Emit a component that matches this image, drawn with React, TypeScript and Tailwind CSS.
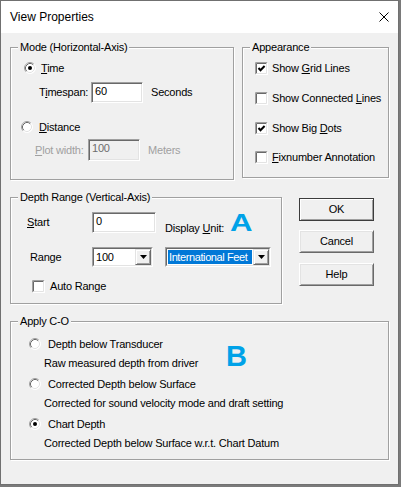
function Radio({ checked = false }: { checked?: boolean }) {
  return (
    <svg width="12" height="12" viewBox="0 0 12 12" className="shrink-0">
      <circle cx="6" cy="6" r="5.5" fill="#fff" />
      <path d="M2.11 9.89 A5.5 5.5 0 0 1 9.89 2.11" fill="none" stroke="#a0a0a0" />
      <path d="M2.82 9.18 A4.5 4.5 0 0 1 9.18 2.82" fill="none" stroke="#696969" />
      <path d="M9.89 2.11 A5.5 5.5 0 0 1 2.11 9.89" fill="none" stroke="#ffffff" />
      <path d="M9.18 2.82 A4.5 4.5 0 0 1 2.82 9.18" fill="none" stroke="#e3e3e3" />
      {checked && <circle cx="6" cy="6" r="2" fill="#000" />}
    </svg>
  );
}

function Check({ checked = false }: { checked?: boolean }) {
  return (
    <svg width="13" height="13" viewBox="0 0 13 13" className="shrink-0">
      <rect x="0" y="0" width="13" height="13" fill="#fff" />
      <path d="M0.5 12.5 V0.5 H12.5" fill="none" stroke="#a0a0a0" />
      <path d="M1.5 11.5 V1.5 H11.5" fill="none" stroke="#696969" />
      <path d="M0.5 12.5 H12.5 V0.5" fill="none" stroke="#ffffff" />
      <path d="M1.5 11.5 H11.5 V1.5" fill="none" stroke="#e3e3e3" />
      {checked && <path d="M3.5 6 L5.5 8.2 L9.6 4" fill="none" stroke="#000" strokeWidth="2" />}
    </svg>
  );
}

function Arrow() {
  return (
    <div className="w-[16px] h-full flex items-center justify-center bg-[#f0f0f0] border border-t-[#e3e3e3] border-l-[#e3e3e3] border-b-[#696969] border-r-[#696969] shadow-[inset_1px_1px_0_#fff,inset_-1px_-1px_0_#a0a0a0]">
      <svg width="7" height="4" viewBox="0 0 7 4">
        <path d="M0 0 H7 L3.5 4 Z" fill="#000" />
      </svg>
    </div>
  );
}

export default function App() {
  return (
    <div className="w-[401px] h-[487px] bg-[#7a7a7a] font-[family-name:'Liberation_Sans',Arial,sans-serif] text-[11px] leading-none tracking-[-0.2px] text-black">
      <div className="w-[399px] h-[485px] border border-[#707070] bg-[#f0f0f0] flex flex-col">
        {/* title bar */}
        <div className="h-[32px] bg-white flex items-center justify-between pl-[9px] pr-[9px]">
          <span className="text-[12px] tracking-normal">View Properties</span>
          <svg width="10" height="10" viewBox="0 0 10 10">
            <path d="M0.5 0.5 L9.5 9.5 M9.5 0.5 L0.5 9.5" stroke="#000" strokeWidth="1" />
          </svg>
        </div>

        <div className="pl-[9px] pt-[14px]">
          <div className="flex gap-[8px] items-start">
            {/* Mode */}
            <div className="relative w-[224px] h-[133px] border border-[#a0a0a0] shadow-[1px_1px_0_#fff,inset_1px_1px_0_#fff]">
              <span className="absolute -top-[7px] left-[7px] px-[2px] bg-[#f0f0f0] leading-[13px]">Mode (Horizontal-Axis)</span>
              <div className="pt-[13px]">
                <div className="flex items-center h-[14px] pl-[13px]">
                  <Radio checked />
                  <span className="ml-[5px]"><u>T</u>ime</span>
                </div>
                <div className="flex items-center h-[21px] mt-[7px] pl-[28px]">
                  <span className="w-[52px]">T<u>i</u>mespan:</span>
                  <div className="w-[52px] h-[21px] border border-t-[#a0a0a0] border-l-[#a0a0a0] border-b-white border-r-white shadow-[inset_1px_1px_0_#696969,inset_-1px_-1px_0_#e3e3e3] bg-white pl-[3px] pt-[3px]">60</div>
                  <span className="ml-[8px]">Seconds</span>
                </div>
                <div className="flex items-center h-[14px] mt-[17px] pl-[10px]">
                  <Radio />
                  <span className="ml-[6px]"><u>D</u>istance</span>
                </div>
                <div className="flex items-center h-[22px] mt-[5px] pl-[24px] text-[#a0a0a0]">
                  <span className="w-[53px]"><u>P</u>lot width:</span>
                  <div className="w-[52px] h-[22px] border border-t-[#a0a0a0] border-l-[#a0a0a0] border-b-white border-r-white shadow-[inset_1px_1px_0_#696969,inset_-1px_-1px_0_#e3e3e3] bg-[#f0f0f0] pl-[3px] pt-[3px] text-[#6d6d6d]">100</div>
                  <span className="ml-[8px]">Meters</span>
                </div>
              </div>
            </div>

            {/* Appearance */}
            <div className="relative w-[147px] h-[131px] border border-[#a0a0a0] shadow-[1px_1px_0_#fff,inset_1px_1px_0_#fff]">
              <span className="absolute -top-[7px] left-[7px] px-[2px] bg-[#f0f0f0] leading-[13px]">Appearance</span>
              <div className="pt-[13px] pl-[12px]">
                <div className="flex items-center h-[14px]">
                  <Check checked />
                  <span className="ml-[4px]">Show <u>G</u>rid Lines</span>
                </div>
                <div className="flex items-center h-[14px] mt-[16px]">
                  <Check />
                  <span className="ml-[4px]">Show Connected <u>L</u>ines</span>
                </div>
                <div className="flex items-center h-[14px] mt-[16px]">
                  <Check checked />
                  <span className="ml-[4px]">Show Big <u>D</u>ots</span>
                </div>
                <div className="flex items-center h-[14px] mt-[15px]">
                  <Check />
                  <span className="ml-[4px]"><u>F</u>ixnumber Annotation</span>
                </div>
              </div>
            </div>
          </div>

          <div className="flex items-start mt-[17px]">
            {/* Depth range */}
            <div className="relative w-[272px] h-[107px] border border-[#a0a0a0] shadow-[1px_1px_0_#fff,inset_1px_1px_0_#fff]">
              <span className="absolute -top-[7px] left-[7px] px-[2px] bg-[#f0f0f0] leading-[13px]">Depth Range (Vertical-Axis)</span>
              <span className="absolute left-[219px] top-[13px] text-[24px] font-bold text-[#00a2e8] tracking-normal scale-x-[1.3] origin-left">A</span>
              <div className="pt-[14px]">
                <div className="flex items-center h-[21px] pl-[16px]">
                  <span className="w-[65px]"><u>S</u>tart</span>
                  <div className="w-[64px] h-[21px] border border-t-[#a0a0a0] border-l-[#a0a0a0] border-b-white border-r-white shadow-[inset_1px_1px_0_#696969,inset_-1px_-1px_0_#e3e3e3] bg-white pl-[3px] pt-[3px]">0</div>
                  <span className="ml-[9px] mt-[12px]">Display <u>U</u>nit:</span>
                </div>
                <div className="flex items-center h-[20px] mt-[14px] pl-[19px]">
                  <span className="w-[62px]">Range</span>
                  <div className="w-[61px] h-[20px] border border-t-[#a0a0a0] border-l-[#a0a0a0] border-b-white border-r-white">
                    <div className="h-full flex border border-t-[#696969] border-l-[#696969] border-b-[#e3e3e3] border-r-[#e3e3e3] bg-white">
                      <span className="flex-1 pl-[2px] pt-[3px]">100</span>
                      <Arrow />
                    </div>
                  </div>
                  <div className="ml-[12px] w-[106px] h-[20px] border border-t-[#a0a0a0] border-l-[#a0a0a0] border-b-white border-r-white">
                    <div className="h-full flex border border-t-[#696969] border-l-[#696969] border-b-[#e3e3e3] border-r-[#e3e3e3] bg-white">
                      <div className="flex-1 p-[1px]">
                        <div className="h-full bg-[#0078d7] text-white pl-[1px] pt-[2px] whitespace-nowrap overflow-hidden tracking-[-0.4px]">International Feet</div>
                      </div>
                      <Arrow />
                    </div>
                  </div>
                </div>
                <div className="flex items-center h-[14px] mt-[12px] pl-[21px]">
                  <Check />
                  <span className="ml-[5px]">Auto Range</span>
                </div>
              </div>
            </div>

            {/* buttons */}
            <div className="ml-[17px] mt-[1px] flex flex-col">
              <button className="w-[75px] h-[23px] bg-[#f0f0f0] border border-[#3c3c3c] shadow-[inset_1px_1px_0_#fff,inset_-1px_-1px_0_#a0a0a0]">OK</button>
              <button className="mt-[9px] w-[75px] h-[23px] bg-[#f0f0f0] border border-t-white border-l-white border-b-[#696969] border-r-[#696969] shadow-[inset_1px_1px_0_#e3e3e3,inset_-1px_-1px_0_#a0a0a0]">Cancel</button>
              <button className="mt-[10px] w-[75px] h-[23px] bg-[#f0f0f0] border border-t-white border-l-white border-b-[#696969] border-r-[#696969] shadow-[inset_1px_1px_0_#e3e3e3,inset_-1px_-1px_0_#a0a0a0]">Help</button>
            </div>
          </div>

          {/* Apply C-O */}
          <div className="relative mt-[17px] w-[379px] h-[139px] border border-[#a0a0a0] shadow-[1px_1px_0_#fff,inset_1px_1px_0_#fff]">
            <span className="absolute -top-[7px] left-[7px] px-[2px] bg-[#f0f0f0] leading-[13px]">Apply C-O</span>
            <span className="absolute left-[215px] top-[20px] text-[29px] font-bold text-[#00a2e8] tracking-normal">B</span>
            <div className="pt-[15px] pl-[18px]">
              <div className="flex items-center h-[14px]">
                <Radio />
                <span className="ml-[7px]">Depth below Transducer</span>
              </div>
              <div className="h-[14px] mt-[5px] pl-[15px] flex items-center">Raw measured depth from driver</div>
              <div className="flex items-center h-[14px] mt-[7px]">
                <Radio />
                <span className="ml-[7px]">Corrected Depth below Surface</span>
              </div>
              <div className="h-[14px] mt-[5px] pl-[15px] flex items-center">Corrected for sound velocity mode and draft setting</div>
              <div className="flex items-center h-[14px] mt-[7px]">
                <Radio checked />
                <span className="ml-[7px]">Chart Depth</span>
              </div>
              <div className="h-[14px] mt-[5px] pl-[15px] flex items-center">Corrected Depth below Surface w.r.t. Chart Datum</div>
            </div>
          </div>
        </div>
      </div>
    </div>
  );
}
